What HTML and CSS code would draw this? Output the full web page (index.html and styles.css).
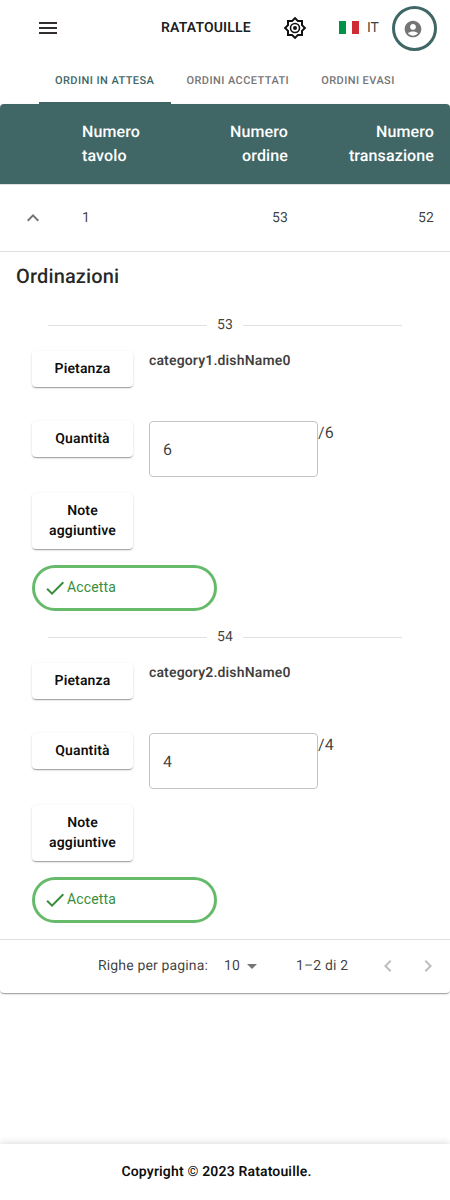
FILE: index.html
```html
<!DOCTYPE html>
<html lang="it">
<head>
<meta charset="utf-8">
<title>Ratatouille</title>
<link rel="stylesheet" href="styles.css">
</head>
<body>
<header class="topbar">
  <svg class="menu-icon" viewBox="0 0 24 24"><path d="M3 18h18v-2H3v2zm0-5h18v-2H3v2zm0-7v2h18V6H3z"/></svg>
  <h1 class="brand">RATATOUILLE</h1>
  <svg class="theme-icon" viewBox="0 0 24 24"><path fill-rule="evenodd" d="M20 8.69V4h-4.69L12 .69 8.69 4H4v4.69L.69 12 4 15.31V20h4.69L12 23.31 15.31 20H20v-4.69L23.31 12 20 8.69zm-2 5.79V18h-3.52L12 20.48 9.52 18H6v-3.52L3.52 12 6 9.52V6h3.52L12 3.52 14.48 6H18v3.52L20.48 12 18 14.48z"/><circle class="ring" cx="12" cy="12" r="4.5"/><circle cx="12" cy="12" r="2"/></svg>
  <div class="language">
    <svg class="flag" viewBox="0 0 20 13"><path fill="#009246" d="M0 0h7v13H0z"/><path fill="#fff" d="M7 0h6v13H7z"/><path fill="#ce2b37" d="M13 0h7v13h-7z"/></svg>
    <span>IT</span>
  </div>
  <button class="account"><svg viewBox="0 0 24 24"><path d="M12 2C6.48 2 2 6.48 2 12s4.48 10 10 10 10-4.48 10-10S17.52 2 12 2zm0 4c1.93 0 3.5 1.57 3.5 3.5S13.93 13 12 13s-3.5-1.57-3.5-3.5S10.07 6 12 6zm0 14c-2.03 0-4.43-.82-6.14-2.88C7.55 15.8 9.68 15 12 15s4.45.8 6.14 2.12C16.43 19.18 14.03 20 12 20z"/></svg></button>
</header>
<nav class="tabs">
  <a class="tab active">ORDINI IN ATTESA</a>
  <a class="tab">ORDINI ACCETTATI</a>
  <a class="tab">ORDINI EVASI</a>
</nav>
<main class="orders">
  <div class="row head">
    <span></span><span>Numero tavolo</span><span>Numero ordine</span><span>Numero transazione</span>
  </div>
  <div class="row summary">
    <svg class="chevron" viewBox="0 0 24 24"><path d="M7.41 15.41 12 10.83l4.59 4.58L18 14l-6-6-6 6z"/></svg>
    <span>1</span><span>53</span><span>52</span>
  </div>
  <section class="details">
    <h2 class="title">Ordinazioni</h2>
    <article class="dish">
      <div class="divider">53</div>
      <div class="fields">
        <div class="label">Pietanza</div><div class="name">category1.dishName0</div>
        <div class="label">Quantità</div><div class="quantity"><div class="input">6</div><span>/6</span></div>
        <div class="label">Note aggiuntive</div><div></div>
      </div>
      <button class="accept"><svg viewBox="0 0 24 24"><path d="M9 16.17 4.83 12l-1.42 1.41L9 19 21 7l-1.41-1.41z"/></svg>Accetta</button>
    </article>
    <article class="dish">
      <div class="divider">54</div>
      <div class="fields">
        <div class="label">Pietanza</div><div class="name">category2.dishName0</div>
        <div class="label">Quantità</div><div class="quantity"><div class="input">4</div><span>/4</span></div>
        <div class="label">Note aggiuntive</div><div></div>
      </div>
      <button class="accept"><svg viewBox="0 0 24 24"><path d="M9 16.17 4.83 12l-1.42 1.41L9 19 21 7l-1.41-1.41z"/></svg>Accetta</button>
    </article>
  </section>
  <div class="pagination">
    <span class="per-page">Righe per pagina:</span>
    <span class="size">10</span>
    <svg class="arrow" viewBox="0 0 24 24"><path d="m7 10 5 5 5-5z"/></svg>
    <span class="range">1–2 di 2</span>
    <svg class="page" viewBox="0 0 24 24"><path d="M15.41 16.59 10.83 12l4.58-4.59L14 6l-6 6 6 6z"/></svg>
    <svg class="page" viewBox="0 0 24 24"><path d="M8.59 16.59 13.17 12 8.59 7.41 10 6l6 6-6 6z"/></svg>
  </div>
</main>
<footer class="footer">Copyright © 2023 Ratatouille.</footer>
</body>
</html>
```
FILE: styles.css
```css
* { box-sizing: border-box; }
body {
  margin: 0;
  height: 1200px;
  display: flex;
  flex-direction: column;
  background: #fff;
  color: rgba(0, 0, 0, .77);
  font: 400 14px/20px Roboto, sans-serif;
  letter-spacing: .15px;
  text-rendering: geometricPrecision;
  overflow: hidden;
}
svg { display: block; flex: none; fill: currentColor; }
button { font: inherit; letter-spacing: inherit; background: none; }
.topbar { height: 56px; display: flex; align-items: center; padding: 0 13px 0 36px; }
.menu-icon { width: 24px; height: 24px; color: #332d2d; }
.brand { margin: 0 0 0 101px; width: 122px; font-size: 14px; line-height: 20px; font-weight: 600; color: rgba(0, 0, 0, .9); }
.theme-icon { width: 24px; height: 24px; color: #111; }
.theme-icon .ring { fill: none; stroke: currentColor; stroke-width: 1.6; }
.language { display: flex; align-items: center; gap: 8px; margin: 0 0 1px 32px; width: 53px; letter-spacing: 0; }
.flag { width: 20px; height: 13px; }
.account { width: 45px; height: 45px; padding: 2px 4px 0 0; display: grid; place-items: center; border: 3px solid #406766; border-radius: 50%; color: #757575; }
.account svg { width: 20px; height: 20px; }
.tabs { height: 48px; display: flex; padding-left: 39px; font-size: 11px; font-weight: 500; letter-spacing: .43px; }
.tab { padding: 15px 16px 11px; color: #757575; white-space: nowrap; }
.tab.active { width: 132px; margin-right: -.5px; color: #406766; border-bottom: 2px solid #406766; }
.orders { height: 889px; flex: none; border-radius: 4px; box-shadow: 0 2px 1px -1px rgba(0, 0, 0, .2), 0 1px 1px rgba(0, 0, 0, .14), 0 1px 3px rgba(0, 0, 0, .12); }
.row { display: grid; grid-template-columns: 66px 100px 138px 146px; border-bottom: 1px solid #e0e0e0; align-items: center; }
.row > span { padding: 0 16px; text-align: right; }
.row > span:nth-child(2) { text-align: left; }
.head { height: 81px; color: #fff; background: #406766; background-clip: padding-box; border-radius: 4px 4px 0 0; font-size: 16px; line-height: 24px; font-weight: 500; letter-spacing: .12px; }
.summary { height: 67px; }
.chevron { width: 24px; height: 24px; margin-left: 21px; color: #757575; }
.title { margin: 0; padding: 8px 16px; font-size: 20px; line-height: 32px; font-weight: 500; letter-spacing: .15px; color: rgba(0, 0, 0, .85); }
.details { height: 688px; border-bottom: 1px solid #e0e0e0; }
.dish { height: 312px; padding: 15px 32px 0; }
.divider { display: flex; align-items: center; gap: 10px; margin: 0 16px; height: 20px; line-height: 20px; }
.divider::before, .divider::after { content: ""; flex: 1; height: 1px; background: #e0e0e0; }
.fields { margin-top: 16px; display: grid; grid-template-columns: 101px 1fr; grid-template-rows: 54px 56px 56px; row-gap: 16px; column-gap: 16px; align-items: start; }
.label { padding: 8px 10px; text-align: center; font-weight: 600; border-radius: 4px; color: rgba(0, 0, 0, .95); box-shadow: 0 2px 1px -1px rgba(0, 0, 0, .2), 0 1px 1px rgba(0, 0, 0, .14), 0 1px 3px rgba(0, 0, 0, .12); }
.name { font-weight: 600; }
.quantity { display: flex; font-size: 16px; line-height: 24px; letter-spacing: .15px; }
.input { width: 169px; height: 56px; padding: 16px 13px; border: 1px solid #c4c4c4; border-radius: 4px; }
.accept { width: 185px; height: 46px; margin-top: 16px; padding: 0 8px 2px; display: flex; align-items: center; border: 3px solid #66bb6a; border-radius: 23px; color: #388e3c; }
.accept svg { width: 24px; height: 24px; margin-top: 2px; }
.pagination { height: 52px; display: flex; align-items: center; padding-left: 98px; white-space: nowrap; }
.per-page { width: 110px; }
.size { margin-left: 16px; width: 16px; }
.arrow { width: 24px; height: 24px; color: #757575; }
.range { margin: 0 28px 0 32px; width: 52px; }
.page { width: 24px; height: 24px; margin-right: 16px; color: #bdbdbd; }
.footer { margin-top: auto; height: 56px; display: flex; justify-content: center; padding: 18px 17px 0 0; font-weight: 600; color: rgba(0, 0, 0, .95); box-shadow: 0 0 8px rgba(0, 0, 0, .18); }
```
